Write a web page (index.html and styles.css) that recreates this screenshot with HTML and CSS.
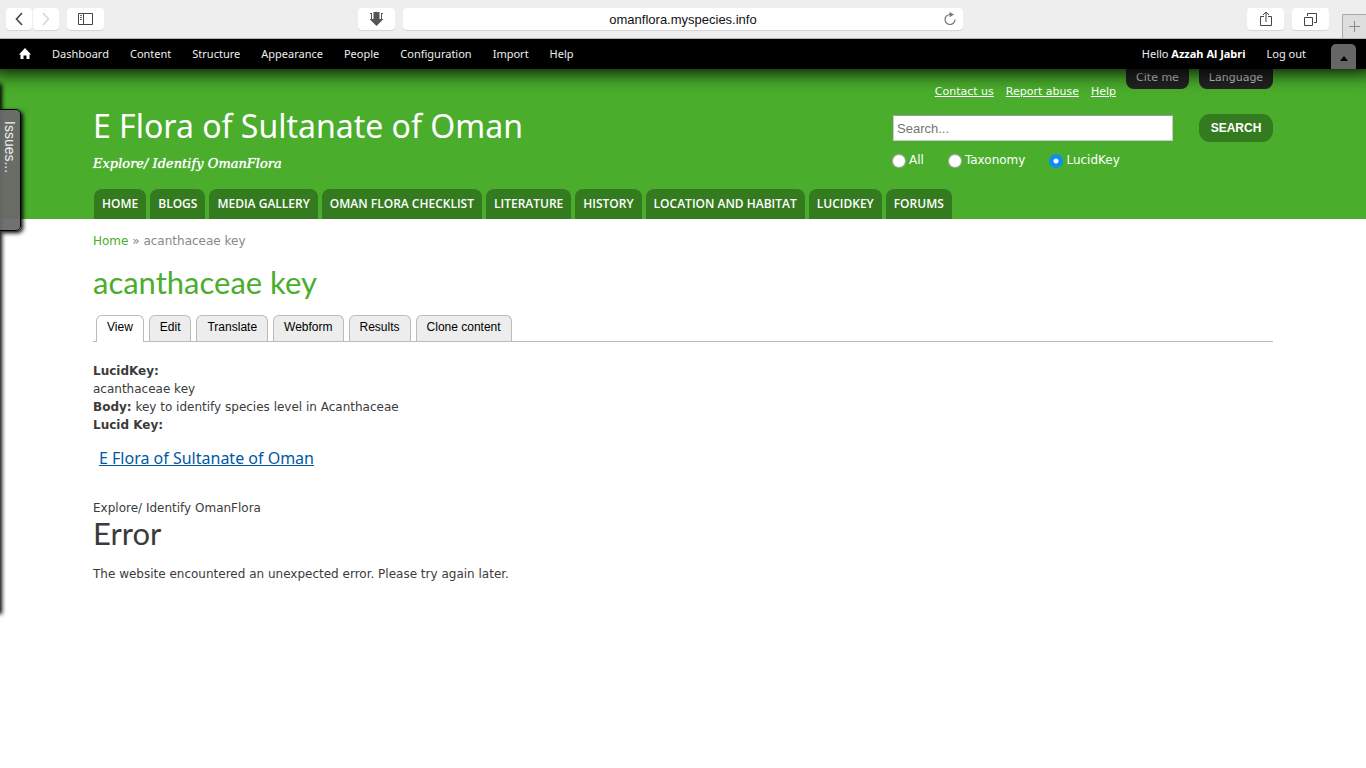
FILE: index.html
```html
<!DOCTYPE html>
<html lang="en">
<head>
<meta charset="utf-8">
<title>acanthaceae key | E Flora of Sultanate of Oman</title>
<link rel="stylesheet" href="styles.css">
</head>
<body>
<div class="browser">
  <div class="browser-side">
    <div class="history">
      <button class="chrome-btn nav-btn" aria-label="Back"><svg width="8" height="14" viewBox="0 0 8 14"><path d="M7 1 1.500 7 7 13" fill="none" stroke="#444" stroke-width="1.600"/></svg></button>
      <button class="chrome-btn nav-btn" aria-label="Forward"><svg width="8" height="14" viewBox="0 0 8 14"><path d="M1 1 6.500 7 1 13" fill="none" stroke="#d4d4d4" stroke-width="1.500"/></svg></button>
    </div>
    <button class="chrome-btn" aria-label="Sidebar"><svg width="15" height="12" viewBox="0 0 15 12"><path d="M.5.5h14v11H.5zM5.500.5v11" fill="none" stroke="#444"/><path d="M2 2.500h2M2 4.500h2M2 6.500h2" stroke="#666"/></svg></button>
  </div>
  <div class="browser-main">
    <button class="chrome-btn" aria-label="Downloads"><svg width="15" height="14" viewBox="0 0 15 14"><path d="M4.500 0h6v7H14.500L7.500 14 .5 7h4z" fill="#555"/><path d="M2.500 1v6M12.500 1v6" stroke="#555"/><path d="M1 1.500h2M12 1.500h2" stroke="#555"/><path d="M3.500 0v6M11.500 0v6" stroke="#fff"/></svg></button>
    <div class="address">
      <input class="address-input" type="text" aria-label="Address" value="omanflora.myspecies.info">
      <button class="reload" aria-label="Reload"><svg width="14" height="14" viewBox="0 0 14 14"><path d="M7 2.500A5 5 0 1 0 12 7.500" fill="none" stroke="#777" stroke-width="1.200"/><path d="M6.500 0v5.200L11 2.600z" fill="#777"/></svg></button>
    </div>
  </div>
  <div class="browser-side browser-end">
    <button class="chrome-btn" aria-label="Share"><svg width="12" height="16" viewBox="0 0 12 16"><path d="M4 5.500H.5v9h11v-9H8M6 11V1M3 4l3-3 3 3" fill="none" stroke="#444"/></svg></button>
    <button class="chrome-btn" aria-label="Show all tabs"><svg width="13" height="13" viewBox="0 0 13 13"><path d="M.5 4.500h8v8h-8zM3.500 3V.5h9v9H10" fill="none" stroke="#444"/></svg></button>
    <button class="new-tab" aria-label="New tab"><svg width="11" height="11" viewBox="0 0 11 11"><path d="M5.500 0v11M0 5.500h11" stroke="#888"/></svg></button>
  </div>
</div>

<nav class="toolbar" aria-label="Administration">
  <a class="toolbar-home" href="#" aria-label="Home"><svg width="12" height="12" viewBox="0 0 12 12"><path d="M6 0 12 6.500h-1.500V11H7.500V7.500h-3V11h-3V6.500H0z" fill="#fff"/></svg></a>
  <a href="#">Dashboard</a><a href="#">Content</a><a href="#">Structure</a><a href="#">Appearance</a><a href="#">People</a><a href="#">Configuration</a><a href="#">Import</a><a href="#">Help</a>
  <a class="toolbar-user" href="#">Hello <strong>Azzah Al Jabri</strong></a><a href="#">Log out</a>
  <button class="toolbar-toggle" aria-label="Hide shortcuts"><svg width="8" height="5" viewBox="0 0 8 5"><path d="M4 0 8 5H0z" fill="#000"/></svg></button>
</nav>

<header class="header">
  <div class="header-row">
    <div class="brand">
      <a class="site-name" href="#">E Flora of Sultanate of Oman</a>
      <p class="slogan">Explore/ Identify OmanFlora</p>
    </div>
    <div class="tools">
      <div class="tools-top">
        <div class="links"><a href="#">Contact us</a><a href="#">Report abuse</a><a href="#">Help</a></div>
        <button class="drop-tab">Cite me</button>
        <button class="drop-tab drop-wide">Language</button>
      </div>
      <form class="search">
        <div class="search-row">
          <input class="search-input" type="text" placeholder="Search..." aria-label="Search">
          <button class="search-btn" type="button">SEARCH</button>
        </div>
        <div class="filters">
          <label class="filter"><input type="radio" name="in">All</label>
          <label class="filter"><input type="radio" name="in">Taxonomy</label>
          <label class="filter"><input type="radio" name="in" checked>LucidKey</label>
        </div>
      </form>
    </div>
  </div>
  <nav class="menu" aria-label="Main menu">
    <a href="#">HOME</a><a href="#">BLOGS</a><a href="#">MEDIA GALLERY</a><a href="#">OMAN FLORA CHECKLIST</a><a href="#">LITERATURE</a><a href="#">HISTORY</a><a href="#">LOCATION AND HABITAT</a><a href="#">LUCIDKEY</a><a href="#">FORUMS</a>
  </nav>
</header>

<main class="content">
  <div class="breadcrumb"><a href="#">Home</a> » acanthaceae key</div>
  <h1 class="page-title">acanthaceae key</h1>
  <nav class="tabs" aria-label="Page tabs">
    <a class="active" href="#">View</a><a href="#">Edit</a><a href="#">Translate</a><a href="#">Webform</a><a href="#">Results</a><a href="#">Clone content</a>
  </nav>
  <div class="fields">
    <div><strong>LucidKey:</strong></div>
    <div>acanthaceae key</div>
    <div><strong>Body:</strong> key to identify species level in Acanthaceae</div>
    <div><strong>Lucid Key:</strong></div>
  </div>
  <a class="key-link" href="#">E Flora of Sultanate of Oman</a>
  <div class="key-slogan">Explore/ Identify OmanFlora</div>
  <h2 class="error-title">Error</h2>
  <p class="error-text">The website encountered an unexpected error. Please try again later.</p>
</main>

<aside class="drawer"><button class="drawer-tab">Issues...</button></aside>
</body>
</html>
```
FILE: styles.css
```css
* { box-sizing: border-box; }
body {
  margin: 0;
  background: #fff;
  color: #3b3b3b;
  font: 12px/18px "DejaVu Sans", Verdana, sans-serif;
  overflow-x: hidden;
  min-height: 100vh;
  position: relative;
}
button { border: 0; padding: 0; margin: 0; cursor: pointer; }
svg { display: block; }

/* Browser bar */
.browser {
  position: relative;
  z-index: 3;
  display: flex;
  height: 39px;
  background: #eee;
  border-bottom: 1px solid #b4b4b4;
}
.browser-side { display: flex; flex: 352 1 0; gap: 8px; padding: 8px 0 0 6px; }
.history { display: flex; gap: 1px; }
.browser-main { display: flex; gap: 8px; padding-top: 8px; flex: 0 1 605px; }
.browser-end { flex-grow: 397; justify-content: flex-end; }
.chrome-btn {
  display: grid;
  place-items: center;
  width: 37px;
  height: 22px;
  flex-shrink: 0;
  border-radius: 4px;
  background: #fff;
  box-shadow: 0 1px 0 #d6d6d6;
}
.nav-btn { width: 26px; }
.address {
  display: flex;
  align-items: center;
  flex: 1;
  height: 22px;
  padding: 0 6px 0 20px;
  border-radius: 4px;
  background: #fff;
  box-shadow: 0 1px 0 #d6d6d6;
}
.address-input {
  flex: 1;
  min-width: 0;
  border: 0;
  padding: 0;
  outline: 0;
  background: none;
  color: #111;
  text-align: center;
  font: 13px "Liberation Sans", Arial, sans-serif;
}
.reload { background: none; }
.new-tab {
  display: grid;
  place-items: center;
  width: 24px;
  height: 24px;
  margin: 6px 0 0 5px;
  border: 1px solid #aaa;
  border-width: 1px 0 0 1px;
  background: #ddd;
}

/* Admin toolbar */
.toolbar {
  position: relative;
  z-index: 2;
  display: flex;
  align-items: center;
  gap: 21px;
  height: 30px;
  padding: 0 10px 2px 19px;
  background: #000;
  box-shadow: 0 -7px 20px 10px #000;
  font: 11px "Noto Sans", sans-serif;
}
.toolbar a { color: #eee; text-decoration: none; white-space: nowrap; }
.toolbar strong { color: #fff; }
.toolbar-home { padding-top: 2px; }
.toolbar-user { margin-left: auto; }
.toolbar-toggle {
  display: grid;
  place-items: center;
  align-self: flex-end;
  width: 25px;
  height: 25px;
  margin: 0 0 -2px 4px;
  padding-top: 4px;
  border-radius: 5px 5px 0 0;
  background: #666;
}

/* Site header */
.header { padding: 0 93px; background: #4aae2c; }
.header-row { display: flex; justify-content: space-between; height: 120px; }
.site-name {
  display: block;
  padding-top: 35px;
  color: #fff;
  font: 32px/44px "Noto Sans", sans-serif;
  text-decoration: none;
}
.slogan {
  margin: 6px 0 0;
  color: #fff;
  font: italic 13px/20px "DejaVu Serif", Georgia, serif;
  text-shadow: 0 0 1px #fff;
}
.tools { width: 380px; }
.tools-top { display: flex; justify-content: flex-end; gap: 10px; height: 45px; }
.links { display: flex; gap: 12px; padding-top: 14px; }
.links a { color: #fff; font-size: 11px; white-space: nowrap; }
.drop-tab {
  width: 63px;
  height: 20px;
  padding-bottom: 4px;
  border-radius: 0 0 8px 8px;
  background: #222;
  color: #ccc;
  font: 11px "DejaVu Sans", sans-serif;
}
.drop-wide { width: 74px; }
.search-row { display: flex; justify-content: space-between; align-items: center; }
.search-input {
  width: 280px;
  height: 26px;
  padding: 0 3px;
  border: 1px solid #ccc;
  border-top-color: #999;
  background: #fff;
  font: 13px "Liberation Sans", Arial, sans-serif;
}
.search-btn {
  width: 74px;
  height: 28px;
  border-radius: 11px;
  background: #347b1f;
  color: #fff;
  font: bold 12px "Liberation Sans", Arial, sans-serif;
}
.filters { display: flex; gap: 25px; padding-top: 9px; color: #fff; }
.filter { display: flex; align-items: center; gap: 4px; }
.filter input {
  appearance: none;
  width: 12px;
  height: 12px;
  margin: 2px 0 0;
  border-radius: 50%;
  background: #fff;
  box-shadow: 0 0 1px 1px #aaa;
}
.filter input:checked {
  background: radial-gradient(circle, #fff 2px, #0a8cff 3px);
  box-shadow: 0 0 0 1px #0a8cff;
}
.menu { display: flex; gap: 4px; padding-left: 1px; }
.menu a {
  padding: 0 8px;
  border-radius: 8px 8px 0 0;
  background: #347b1f;
  color: #fff;
  font: 600 12px/30px "Open Sans", sans-serif;
  text-decoration: none;
  white-space: nowrap;
}

/* Page */
.content { padding: 13px 93px 40px; }
.breadcrumb { color: #888; }
.breadcrumb a { color: #4aae2c; text-decoration: none; }
.page-title {
  margin: 10px 0 0;
  color: #4aae2c;
  font: 31px/44px Lato, sans-serif;
}
.tabs {
  display: flex;
  gap: 5px;
  margin-top: 11px;
  padding-left: 3px;
  border-bottom: 1px solid #bbb;
}
.tabs a {
  height: 26px;
  padding: 0 10px;
  border: 1px solid #bbb;
  border-bottom: 0;
  border-radius: 6px 6px 0 0;
  background: #ededed;
  color: #000;
  font: 12px/23px "Liberation Sans", Arial, sans-serif;
  text-decoration: none;
}
.tabs .active { height: 27px; margin-bottom: -1px; background: #fff; }
.fields { margin-top: 20px; }
.key-link {
  display: inline-block;
  margin: 12px 0 0 6px;
  color: #0058a5;
  font: 16px/24px "Noto Sans", sans-serif;
}
.key-slogan { margin-top: 29px; }
.error-title { margin: 0; font: 31px/32px Lato, sans-serif; }
.error-text { margin: 16px 0 0; }

/* Slide-out panel docked at the left edge */
.drawer {
  position: absolute;
  z-index: 1;
  left: -10px;
  top: 86px;
  width: 10px;
  height: 526px;
  box-shadow: 0 0 4px 2px #000;
}
.drawer-tab {
  position: absolute;
  left: 9px;
  top: 23px;
  width: 22px;
  height: 122px;
  padding: 11px 0;
  border: 1px solid #000;
  border-radius: 0 5px 5px 0;
  background: rgba(105, 105, 105, 0.95);
  box-shadow: 2px 2px 4px #000;
  color: #eee;
  text-align: left;
  writing-mode: vertical-rl;
  font: 14px "Liberation Sans", Arial, sans-serif;
}
```
